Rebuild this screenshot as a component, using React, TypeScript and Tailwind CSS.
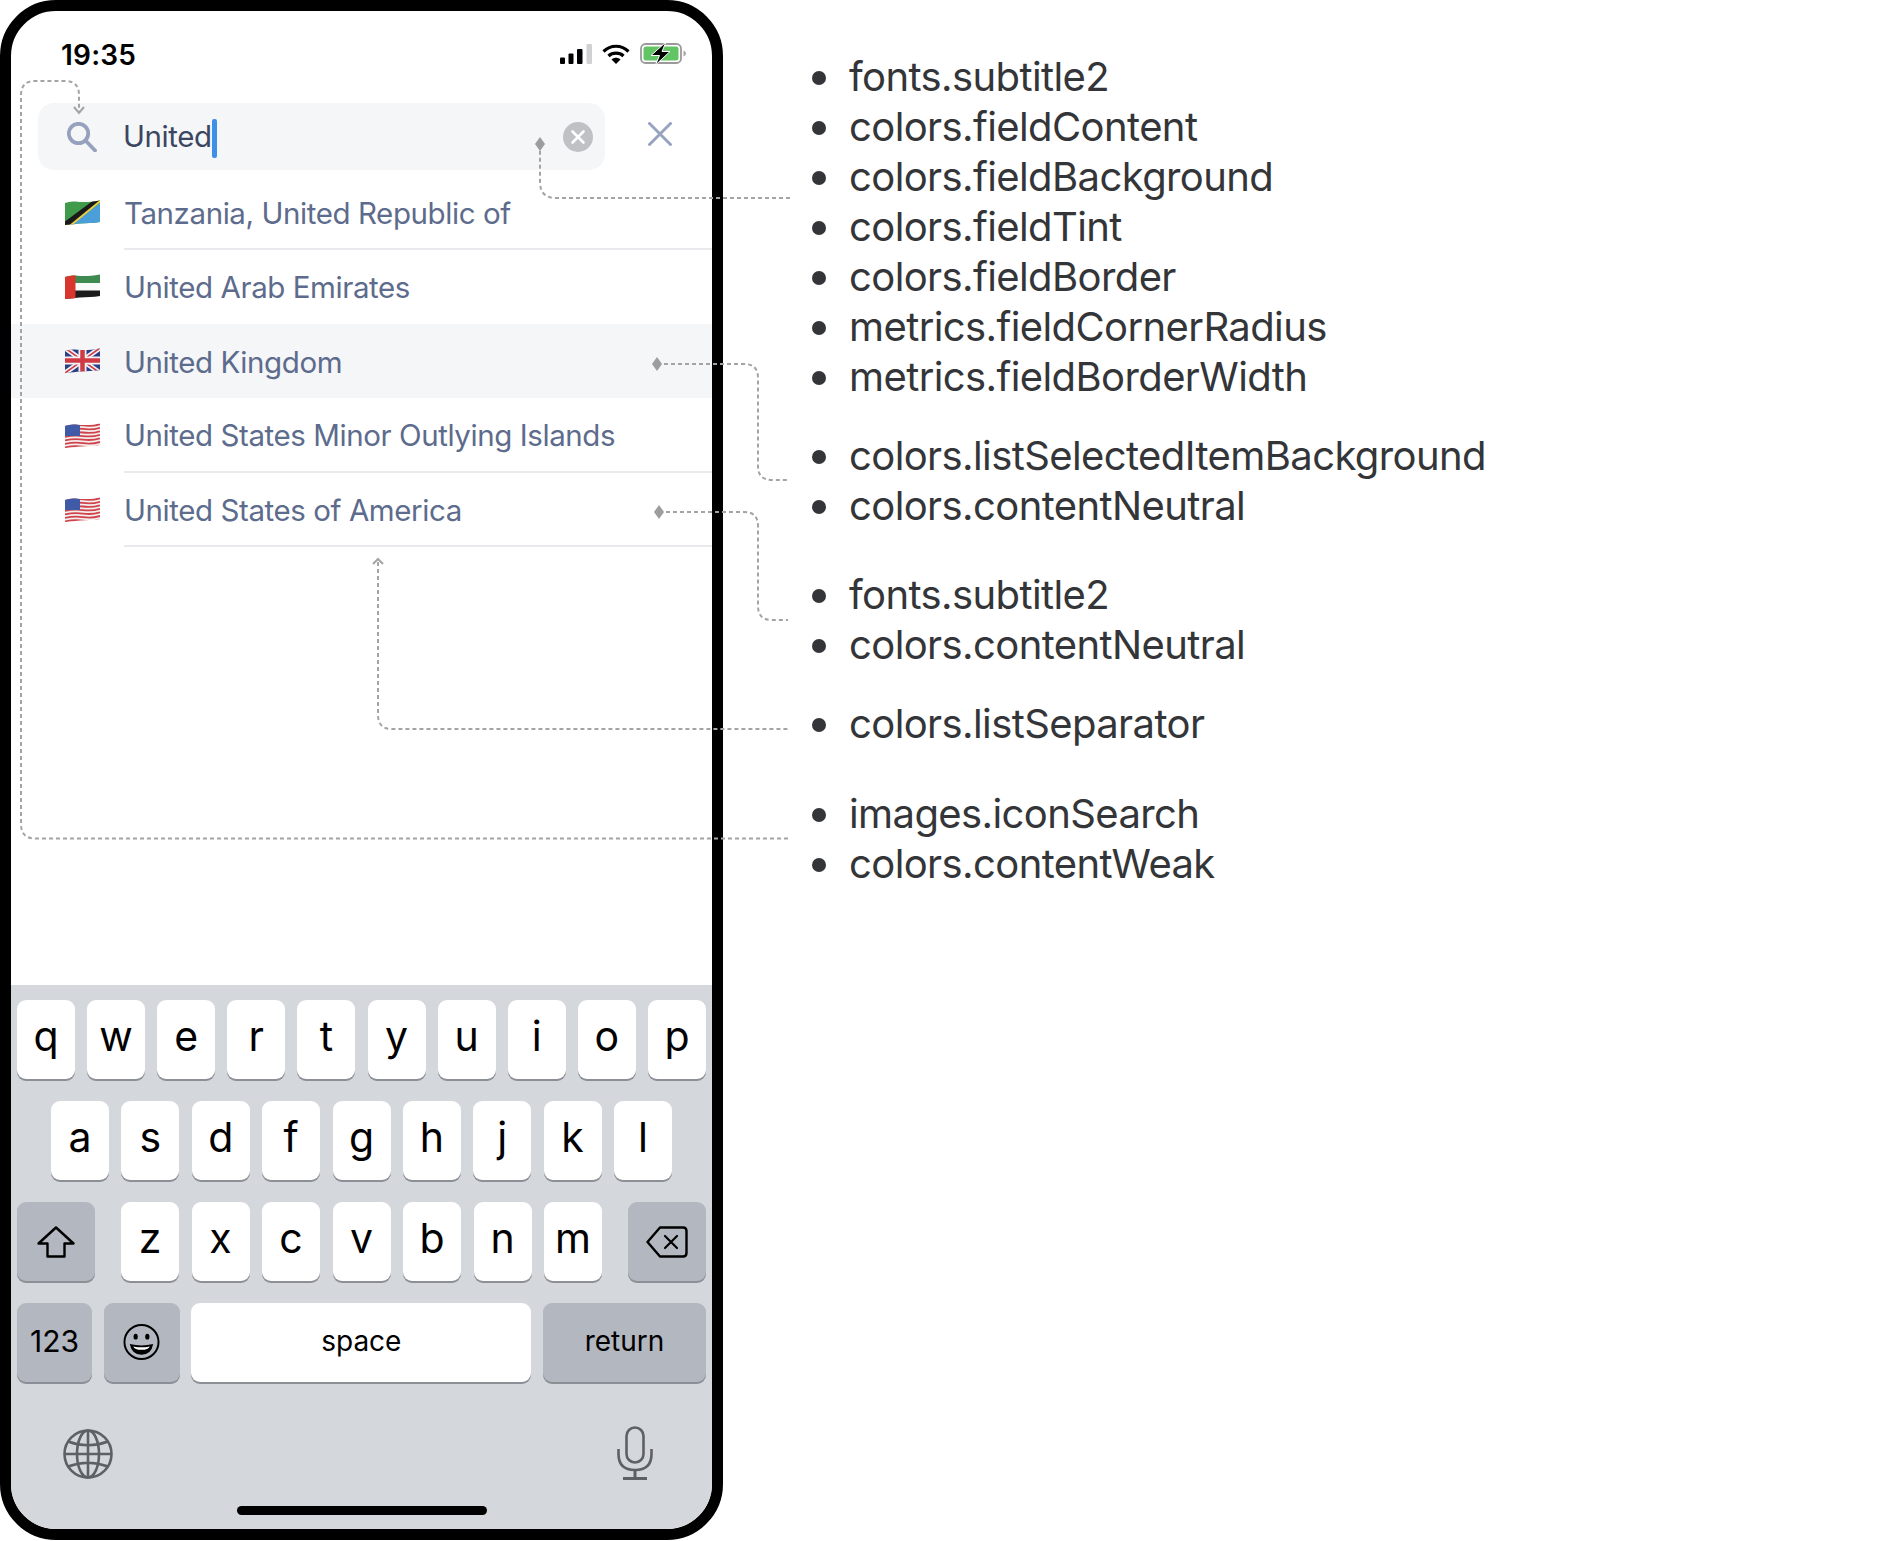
import React from 'react';

const countries = [
  { name: 'Tanzania, United Republic of', flag: 'tz', separator: true },
  { name: 'United Arab Emirates', flag: 'ae', separator: false },
  { name: 'United Kingdom', flag: 'gb', separator: false, selected: true },
  { name: 'United States Minor Outlying Islands', flag: 'us', separator: true },
  { name: 'United States of America', flag: 'us', separator: true },
];

const tokenGroups = [
  { className: '', items: ['fonts.subtitle2', 'colors.fieldContent', 'colors.fieldBackground', 'colors.fieldTint', 'colors.fieldBorder', 'metrics.fieldCornerRadius', 'metrics.fieldBorderWidth'] },
  { className: 'mt-[29px]', items: ['colors.listSelectedItemBackground', 'colors.contentNeutral'] },
  { className: 'mt-[39px]', items: ['fonts.subtitle2', 'colors.contentNeutral'] },
  { className: 'mt-[29px]', items: ['colors.listSeparator'] },
  { className: 'mt-[40px]', items: ['images.iconSearch', 'colors.contentWeak'] },
];

const WAVE = 'M0 3Q5 1 10 1.500T20 2T35 .5V22Q30 23 25 23T15 23.500T0 25Z';

const Flag = ({ code, uid }: { code: string; uid: string }) => {
  const clipId = `flag-${uid}`;
  return (
    <svg viewBox="0 0 35 25" className="w-[35px] h-[25px] shrink-0">
      <clipPath id={clipId}>
        <path d={WAVE} />
      </clipPath>
      <g clipPath={`url(#${clipId})`}>
        {code === 'tz' && (
          <>
            <rect width="35" height="25" fill="#3f9a4a" />
            <path d="M35 3V25H6Z" fill="#4a9fd8" />
            <path d="M-2 25L31 0H38L5 27Z" fill="#e9cf3e" />
            <path d="M-2 23L29 0H35L2 27Z" fill="#1a1a1a" />
          </>
        )}
        {code === 'ae' && (
          <>
            <rect width="35" height="9" fill="#3f8a50" />
            <rect y="9" width="35" height="7.500" fill="#fafafa" />
            <rect y="16.500" width="35" height="9" fill="#1c1c1c" />
            <rect width="10.500" height="25" fill="#d8352c" />
          </>
        )}
        {code === 'gb' && (
          <>
            <rect width="35" height="25" fill="#2c3f85" />
            <path d="M0 0L35 25M35 0L0 25" stroke="#f3f3f6" strokeWidth="5" />
            <path d="M0 0L35 25M35 0L0 25" stroke="#cf3a44" strokeWidth="1.600" />
            <path d="M17.500 0V25M0 12.500H35" stroke="#f3f3f6" strokeWidth="8" />
            <path d="M17.500 0V25M0 12.500H35" stroke="#cf3a44" strokeWidth="4.500" />
          </>
        )}
        {code === 'us' && (
          <>
            <rect width="35" height="25" fill="#f4efef" />
            {[0, 1, 2, 3, 4, 5, 6].map((i) => (
              <path key={i} d={`M0 ${3.2 + i * 3.55}Q9 ${1.2 + i * 3.55} 18 ${2.4 + i * 3.55}T35 ${1.2 + i * 3.55}`} stroke="#d1434a" strokeWidth="1.800" fill="none" />
            ))}
            <rect width="15" height="13" fill="#3f5aa6" />
          </>
        )}
      </g>
    </svg>
  );
};

const LetterKey = ({ label }: { label: string }) => (
  <div className="w-[58px] h-[79px] shrink-0 flex items-center justify-center rounded-[9px] bg-white shadow-[0_2px_0_#8c8f95] text-[41px] text-black leading-none pb-[7px]">
    {label}
  </div>
);

const GrayKey = ({ className, children }: { className: string; children: React.ReactNode }) => (
  <div className={`h-[79px] shrink-0 flex items-center justify-center rounded-[9px] bg-[#b3b7bf] shadow-[0_2px_0_#8c8f95] text-black ${className}`}>
    {children}
  </div>
);

const Annotations = () => (
  <svg viewBox="0 0 1880 1541" className="absolute inset-0 w-[1880px] h-[1541px] pointer-events-none">
    <g fill="none" stroke="#a4a4a4" strokeWidth="2" strokeDasharray="4 3">
      <path d="M790 198H556Q540 198 540 182V150" />
      <path d="M664 364H744Q758 364 758 378V466Q758 480 772 480H788" />
      <path d="M666 512H744Q758 512 758 526V606Q758 620 772 620H788" />
      <path d="M378 562V715Q378 729 392 729H790" />
      <path d="M788 838.500H35Q21 838.500 21 824V95Q21 81 35 81H65Q79 81 79 95V112" />
    </g>
    <g fill="none" stroke="#a4a4a4" strokeWidth="2">
      <path d="M74 107L79 113L84 107" />
      <path d="M373 564L378 559L383 564" />
    </g>
    <g fill="#9d9d9d">
      <path d="M540 137L545 144L540 151L535 144Z" />
      <path d="M657 357L662 364L657 371L652 364Z" />
      <path d="M659 505L664 512L659 519L654 512Z" />
    </g>
  </svg>
);

export default function App() {
  return (
    <div className="relative w-[1880px] h-[1541px] bg-white flex overflow-hidden font-[Inter,sans-serif]">
      <div className="w-[723px] h-[1540px] shrink-0 flex flex-col border-[11px] border-black rounded-[56px] overflow-hidden bg-white">
        <div className="h-[92px] shrink-0 flex items-start justify-between pt-[27px] pl-[50px] pr-[26px]">
          <span className="text-[28px] leading-[34px] font-semibold text-black tracking-[0.2px]">19:35</span>
          <div className="flex items-center gap-[10px] pt-[5px]">
            <svg viewBox="0 0 32 20" className="w-[32px] h-[20px]">
              <rect x="0" y="13.500" width="5" height="6.500" rx="1" fill="#000" />
              <rect x="8.500" y="9.500" width="5" height="10.500" rx="1" fill="#000" />
              <rect x="17" y="5" width="5.500" height="15" rx="1" fill="#000" />
              <rect x="26.500" y="0" width="5.500" height="20" rx="1" fill="#d0d1d3" />
            </svg>
            <svg viewBox="0 0 28 20" className="w-[28px] h-[20px]">
              <path d="M1.500 7.500C8.500 .5 19.500 .5 26.500 7.500" fill="none" stroke="#000" strokeWidth="3.200" />
              <path d="M6.500 12C10.500 8.200 17.500 8.200 21.500 12" fill="none" stroke="#000" strokeWidth="3.200" />
              <path d="M9.500 15.500C12 13.200 16 13.200 18.500 15.500L14 20Z" fill="#000" />
            </svg>
            <svg viewBox="0 0 46 21" className="w-[46px] h-[21px] overflow-visible">
              <rect x="1" y="1" width="40" height="19" rx="4.500" fill="#fff" stroke="#9a9a9a" strokeWidth="1.800" />
              <rect x="3.500" y="3.500" width="35" height="14" rx="2.500" fill="#62c463" />
              <path d="M43.500 7.500Q46 8.500 46 10.500T43.500 13.500Z" fill="#a5a5a5" />
              <path d="M26 -1L11 12.500H19.500L15.500 22L30 8.500H22Z" fill="#000" stroke="#fff" strokeWidth="1" />
            </svg>
          </div>
        </div>

        <div className="h-[67px] shrink-0 flex items-center pl-[27px]">
          <div className="w-[567px] h-[67px] shrink-0 flex items-center rounded-[16px] bg-[#f5f6f8] pl-[29px] pr-[12px]">
            <svg viewBox="0 0 30 30" className="w-[30px] h-[30px] shrink-0">
              <circle cx="11.500" cy="11.500" r="9.700" fill="none" stroke="#96a2bd" strokeWidth="3.800" />
              <path d="M18.500 18.500L28 28.500" fill="none" stroke="#96a2bd" strokeWidth="3.800" strokeLinecap="round" />
            </svg>
            <span className="ml-[26px] text-[29.500px] leading-none tracking-[-0.42px] text-[#3b465f] mt-[1px]">United</span>
            <span className="w-[5px] h-[39px] rounded-[2px] bg-[#3f8fe8] mt-[3px]" />
            <svg viewBox="0 0 30 30" className="w-[30px] h-[30px] ml-auto">
              <circle cx="15" cy="15" r="15" fill="#bfc1c5" />
              <path d="M9.500 9.500L20.500 20.500M20.500 9.500L9.500 20.500" stroke="#fff" strokeWidth="2.600" strokeLinecap="round" />
            </svg>
          </div>
          <svg viewBox="0 0 24 24" className="w-[24px] h-[24px] ml-[43px] mb-[5px]">
            <path d="M1.500 1.500L22.500 22.500M22.500 1.500L1.500 22.500" fill="none" stroke="#98a4bf" strokeWidth="3" strokeLinecap="round" />
          </svg>
        </div>

        <div className="shrink-0 pt-[5px]">
          {countries.map((country, i) => (
            <div key={country.name} className={`h-[74.300px] flex items-center pl-[54px] ${country.selected ? 'bg-[#f5f6f8]' : ''}`}>
              <Flag code={country.flag} uid={String(i)} />
              <div className={`ml-[24px] h-full flex-1 flex items-center pt-[2px] text-[29.500px] tracking-[-0.42px] text-[#5d6b8c] ${country.separator ? 'border-b border-[#e9eaee] shadow-[0_1px_0_#e9eaee]' : ''}`}>
                {country.name}
              </div>
            </div>
          ))}
        </div>

        <div className="flex-1" />

        <div className="h-[544px] shrink-0 flex flex-col bg-[#d4d7dc] pt-[15px] px-[6px]">
          <div className="flex flex-col gap-[22px]">
            <div className="flex justify-between">
              {'qwertyuiop'.split('').map((k) => <LetterKey key={k} label={k} />)}
            </div>
            <div className="flex justify-between px-[34px]">
              {'asdfghjkl'.split('').map((k) => <LetterKey key={k} label={k} />)}
            </div>
            <div className="flex items-center">
              <GrayKey className="w-[78px]">
                <svg viewBox="0 0 38 32" className="w-[38px] h-[32px]">
                  <path d="M19 1.500L36.500 17.500H27.500V30.500H10.500V17.500H1.500Z" fill="none" stroke="#000" strokeWidth="2.400" strokeLinejoin="round" />
                </svg>
              </GrayKey>
              <div className="flex-1 flex justify-between px-[26px]">
                {'zxcvbnm'.split('').map((k) => <LetterKey key={k} label={k} />)}
              </div>
              <GrayKey className="w-[78px]">
                <svg viewBox="0 0 42 32" className="w-[42px] h-[32px]">
                  <path d="M14 1.500H37Q40.500 1.500 40.500 5V27Q40.500 30.500 37 30.500H14L1.500 16Z" fill="none" stroke="#000" strokeWidth="2.400" strokeLinejoin="round" />
                  <path d="M19 10L31 22M31 10L19 22" fill="none" stroke="#000" strokeWidth="2.200" strokeLinecap="round" />
                </svg>
              </GrayKey>
            </div>
            <div className="flex justify-between">
              <GrayKey className="w-[75px] text-[30px] pb-[3px]">123</GrayKey>
              <GrayKey className="w-[76px] pb-[2px]">
                <svg viewBox="0 0 38 38" className="w-[37px] h-[38px]">
                  <circle cx="19" cy="19" r="17.500" fill="none" stroke="#000" strokeWidth="2" />
                  <ellipse cx="13" cy="13.500" rx="2.200" ry="3" fill="#000" />
                  <ellipse cx="25" cy="13.500" rx="2.200" ry="3" fill="#000" />
                  <path d="M7 21Q19 24 31 21Q29 32 19 32Q9 32 7 21Z" fill="#000" />
                  <path d="M10.500 23.500Q19 25.500 27.500 23.500Q26 27 19 27Q12 27 10.500 23.500Z" fill="#fff" />
                </svg>
              </GrayKey>
              <div className="w-[340px] h-[79px] flex items-center justify-center rounded-[9px] bg-white shadow-[0_2px_0_#8c8f95] text-[28px] text-black pb-[4px]">space</div>
              <GrayKey className="w-[163px] text-[28px] pb-[4px]">return</GrayKey>
            </div>
          </div>
          <div className="flex justify-between items-center h-[54px] mt-[44px] pl-[46px] pr-[53px]">
            <svg viewBox="0 0 50 50" className="w-[50px] h-[50px] mt-[2px]">
              <g fill="none" stroke="#5d6064" strokeWidth="2.600">
                <circle cx="25" cy="25" r="23.500" />
                <ellipse cx="25" cy="25" rx="11" ry="23.500" />
                <path d="M25 1.500V48.500M1.500 25H48.500M5 12.500Q25 20 45 12.500M5 37.500Q25 30 45 37.500" />
              </g>
            </svg>
            <svg viewBox="0 0 36 54" className="w-[36px] h-[54px]">
              <rect x="9.500" y="1.500" width="17" height="35" rx="8.500" fill="none" stroke="#5d6064" strokeWidth="2.600" />
              <path d="M1.500 23V28Q1.500 44 18 44Q34.500 44 34.500 28V23" fill="none" stroke="#5d6064" strokeWidth="2.600" />
              <path d="M18 44V52M6 52.500H30" fill="none" stroke="#5d6064" strokeWidth="3" />
            </svg>
          </div>
          <div className="mt-[26px] mx-auto w-[250px] h-[9px] rounded-full bg-black" />
        </div>
      </div>

      <div className="ml-[96px] pt-[52px] text-[40px] leading-[50px] tracking-[-0.6px] text-[#333538]">
        {tokenGroups.map((group, i) => (
          <ul key={i} className={`pl-[30px] ${group.className}`}>
            {group.items.map((item) => (
              <li key={item} className="relative">
                <span className="absolute left-[-37px] top-[19px] w-[14px] h-[14px] rounded-full bg-[#333538]" />
                {item}
              </li>
            ))}
          </ul>
        ))}
      </div>

      <Annotations />
    </div>
  );
}
